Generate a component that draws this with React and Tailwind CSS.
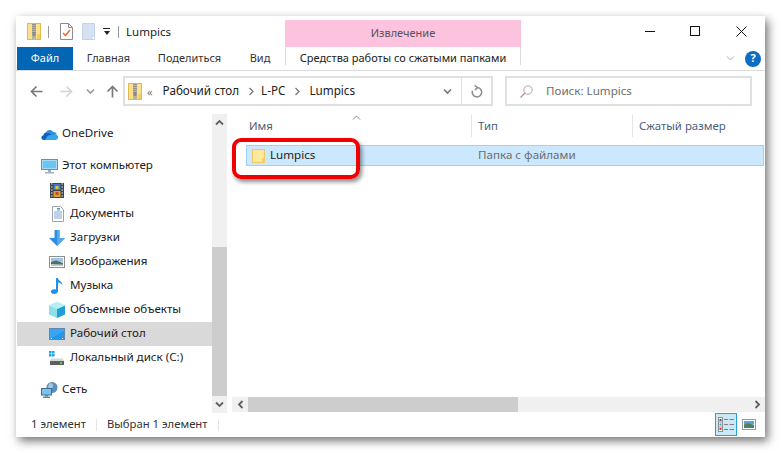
import React from 'react';

const font = { fontFamily: '"Noto Sans", sans-serif' };

// Iconos del explorador
function ZipIcon() {
  return (
    <svg width="14" height="17" viewBox="0 0 14 17">
      <rect x="0.5" y="0.5" width="13" height="16" fill="#fbe08f" stroke="#e3b94c" />
      <rect x="5" y="1" width="4" height="15" fill="#b9b49c" />
      <path d="M6 1v9M8 1v9" stroke="#6f6f6f" strokeDasharray="1 1" />
      <rect x="5.5" y="9" width="3" height="4" fill="#8a8a8a" />
      <rect x="10" y="11" width="3" height="5" fill="#f3cc6c" />
    </svg>
  );
}

function CheckDocIcon() {
  return (
    <svg width="13" height="17" viewBox="0 0 13 17">
      <path d="M.5.5h8l4 4v12H.5z" fill="#fff" stroke="#8c8c8c" />
      <path d="M8.5.5v4h4" fill="none" stroke="#8c8c8c" />
      <path d="M3 10l2.5 2.5L10 7" fill="none" stroke="#e8703a" strokeWidth="1.6" />
    </svg>
  );
}

function BlankDocIcon() {
  return (
    <svg width="13" height="17" viewBox="0 0 13 17">
      <path d="M.5.5h12v16H.5z" fill="#d6e2f3" stroke="#c3d3ea" />
      <path d="M10 13h2.5v3.5H10z" fill="#fff" stroke="#c3d3ea" />
    </svg>
  );
}

function ArrowIcon({ color, flip }) {
  return (
    <svg width="13" height="13" viewBox="0 0 13 13" className={flip ? 'rotate-180' : ''}>
      <path d="M12.5 6.5H1.5M6.5 1.5l-5 5 5 5" fill="none" stroke={color} strokeWidth="1.7" />
    </svg>
  );
}

function SmallChevron({ color = '#777', width = 1.6, up, left, right }) {
  const rot = up ? 'rotate-180' : left ? 'rotate-90' : right ? '-rotate-90' : '';
  return (
    <svg width="9" height="7" viewBox="0 0 9 7" className={rot}>
      <path d="M1 1.5l3.5 3.5L8 1.5" fill="none" stroke={color} strokeWidth={width} />
    </svg>
  );
}

function OneDriveIcon() {
  return (
    <svg width="17" height="11" viewBox="0 0 17 11">
      <path d="M3 11C0 11-.7 7 2.4 6.2 3 3 6.3 2.600 7.700 4 10 4 11 5.500 11 7l-1 4z" fill="#0c64b8" />
      <path d="M5 3.500C6.500.5 10.500.3 12 3c2-.3 3.500.8 3.700 2.400L11 6.500C10 4.500 8 3.500 5 3.500z" fill="#2a8fdc" />
      <path d="M4 11l3-4.500 4-.5 3-.5c2 0 3.500 1.500 3 3.500-.3 1.300-1.300 2-2.500 2z" fill="#37a6ee" />
    </svg>
  );
}

function PcIcon() {
  return (
    <svg width="17" height="15" viewBox="0 0 17 15">
      <rect x="0.5" y="0.5" width="16" height="10" fill="#a6dcf7" stroke="#6f8ea3" />
      <rect x="2" y="2" width="13" height="7" fill="#6cc4f2" />
      <rect x="7" y="11" width="3" height="2" fill="#9fb1be" />
      <rect x="4" y="13" width="9" height="1.500" fill="#9fb1be" />
    </svg>
  );
}

function VideoIcon() {
  return (
    <svg width="14" height="15" viewBox="0 0 14 15">
      <rect width="14" height="15" fill="#3b4450" />
      <path d="M1 1h1.500M1 4h1.500M1 7h1.500M1 10h1.500M1 13h1.500M11.500 1H13M11.500 4H13M11.500 7H13M11.500 10H13M11.500 13H13" stroke="#e6e6e6" />
      <rect x="3.500" y="1" width="7" height="6" fill="#3f7cc4" />
      <rect x="3.500" y="8" width="7" height="6" fill="#d9a531" />
      <rect x="5.500" y="3" width="3" height="3" fill="#e3c33c" />
      <rect x="5.500" y="9" width="3" height="3" fill="#c4492d" />
    </svg>
  );
}

function DocsIcon() {
  return (
    <svg width="12" height="16" viewBox="0 0 12 16">
      <path d="M.5.5h8l3 3v12H.5z" fill="#fdfdfd" stroke="#9aa5b1" />
      <path d="M2 6h8M2 8h8M2 10h8M2 12h8" stroke="#7fa8cf" />
      <path d="M5 2.500h3M5 4h3" stroke="#4a90d0" />
    </svg>
  );
}

function DownloadIcon() {
  return (
    <svg width="16" height="16" viewBox="0 0 16 16">
      <path d="M5.500 0h5v8H16l-8 8-8-8h5.500z" fill="#2f8de0" />
      <path d="M8 0h2.500v8H16l-8 8z" fill="#56a8ee" />
    </svg>
  );
}

function PictureIcon() {
  return (
    <svg width="16" height="12" viewBox="0 0 16 12">
      <rect x="0.5" y="0.5" width="15" height="11" fill="#fff" stroke="#8f8f8f" />
      <rect x="2" y="2" width="12" height="4" fill="#9cc4e4" />
      <path d="M2 6l5-1.500L14 7v3H2z" fill="#4d6f64" />
      <path d="M2 8l12 .5V10H2z" fill="#b9c7c0" />
    </svg>
  );
}

function MusicIcon() {
  return (
    <svg width="12" height="16" viewBox="0 0 12 16">
      <path d="M5 0h1.800c.3 3 4.700 3.500 4.700 7-1-1.500-3-2.300-4.500-2.500V13c0 2-2 3-4 3S0 15 0 13.500 2 11 5 11.500z" fill="#1f8fe8" />
    </svg>
  );
}

function CubeIcon() {
  return (
    <svg width="16" height="16" viewBox="0 0 16 16">
      <path d="M8 0l8 3.500v9L8 16l-8-3.500v-9z" fill="#8ce0ea" />
      <path d="M8 7l8-3.500v9L8 16z" fill="#1f9fd2" />
      <path d="M8 0l8 3.500L8 7 0 3.500z" fill="#b7f0f3" />
    </svg>
  );
}

function DesktopIcon() {
  return (
    <svg width="16" height="12" viewBox="0 0 16 12">
      <rect x="0.5" y="0.5" width="15" height="11" fill="#3aa5f5" stroke="#5a8cb3" />
      <path d="M1 11L15 3v8z" fill="#2596ee" />
      <path d="M2 10.500h1M13 10.500h1" stroke="#fff" />
    </svg>
  );
}

function DiskIcon() {
  return (
    <svg width="15" height="15" viewBox="0 0 15 15">
      <rect x="0" y="0" width="2.500" height="2.500" fill="#1aa3e8" />
      <rect x="3" y="0" width="2.500" height="2.500" fill="#1aa3e8" />
      <rect x="0" y="3" width="2.500" height="2.500" fill="#1aa3e8" />
      <rect x="3" y="3" width="2.500" height="2.500" fill="#1aa3e8" />
      <path d="M2 7.500h11.500L15 10H1z" fill="#d7d7d7" />
      <rect x="1" y="10" width="14" height="4" fill="#5f5f5f" />
      <rect x="11" y="11" width="2" height="2" fill="#45d04b" />
    </svg>
  );
}

function NetworkIcon() {
  return (
    <svg width="17" height="16" viewBox="0 0 17 16">
      <circle cx="11" cy="5.500" r="5.500" fill="#5a8fc0" />
      <path d="M9 1c3 0 4 3 2 5S7 6 7 4z" fill="#a8c7dd" />
      <rect x="0.5" y="6.500" width="10" height="6.500" fill="#7cc3ec" stroke="#3f6f92" />
      <rect x="4" y="13" width="3" height="1.500" fill="#5b8aa8" />
      <rect x="2" y="14.500" width="7" height="1.500" fill="#5b8aa8" />
    </svg>
  );
}

function FolderIcon() {
  return (
    <svg width="13" height="14" viewBox="0 0 13 14">
      <rect x="0.5" y="0.500" width="12" height="13" fill="#fde89c" stroke="#e9c867" />
      <rect x="10" y="9" width="2.500" height="4.500" fill="#f4d06f" />
    </svg>
  );
}

function DetailsViewIcon() {
  return (
    <svg width="16" height="15" viewBox="0 0 16 15">
      <rect x="0.500" y="0.500" width="4" height="14" fill="#fff" stroke="#8f8f8f" />
      <path d="M1 5h3M1 10h3" stroke="#8f8f8f" />
      <rect x="1.500" y="2" width="2" height="2" fill="#555" />
      <rect x="1.500" y="6.500" width="2" height="2" fill="#3f8fe0" />
      <rect x="1.500" y="11" width="2" height="2" fill="#d83030" />
      <path d="M6 2.500h4M11.500 2.500H16M6 7.500h4M11.500 7.500H16M6 12.500h4M11.500 12.500H16" stroke="#8b7d7b" />
    </svg>
  );
}

function TilesViewIcon() {
  return (
    <svg width="14" height="11" viewBox="0 0 14 11">
      <rect x="0.500" y="0.500" width="13" height="10" fill="#fff" stroke="#9a9a9a" />
      <rect x="2" y="2" width="10" height="3.500" fill="#5aa5d8" />
      <path d="M2 5.500l4-1.500 6 2v3H2z" fill="#4d7f6a" />
    </svg>
  );
}

const navItems = [
  { label: 'OneDrive', icon: <OneDriveIcon />, top: 'mt-[11px]', level: 0 },
  { label: 'Этот компьютер', icon: <PcIcon />, top: 'mt-2', level: 0 },
  { label: 'Видео', icon: <VideoIcon />, iconClass: 'ml-px', labelClass: '-ml-px', level: 1 },
  { label: 'Документы', icon: <DocsIcon />, iconClass: 'ml-[3px]', labelClass: '-ml-[3px]', level: 1 },
  { label: 'Загрузки', icon: <DownloadIcon />, level: 1 },
  { label: 'Изображения', icon: <PictureIcon />, level: 1 },
  { label: 'Музыка', icon: <MusicIcon />, iconClass: 'ml-[2px]', labelClass: '-ml-[2px]', level: 1 },
  { label: 'Объемные объекты', icon: <CubeIcon />, level: 1 },
  { label: 'Рабочий стол', icon: <DesktopIcon />, level: 1, selected: true },
  { label: 'Локальный диск (C:)', icon: <DiskIcon />, level: 1 },
  { label: 'Сеть', icon: <NetworkIcon />, top: 'mt-2', level: 0 },
];

function NavRow({ item }) {
  return (
    <div className={`flex h-6 items-center ${item.top || ''} ${item.selected ? 'bg-[#d9d9d9]' : ''} ${item.level ? 'pl-[32px]' : 'pl-[24px]'}`}>
      <span className={`flex h-4 w-[21px] items-center ${item.iconClass || ''}`}>{item.icon}</span>
      <span className={`pb-[2px] text-[11.6px] text-[#1a1a1a] ${item.labelClass || ''}`}>{item.label}</span>
    </div>
  );
}

function App() {
  return (
    <div className="h-[453px] w-[781px] bg-white pl-4 pt-4" style={font}>
      <div className="relative flex h-[421px] w-[749px] flex-col bg-white shadow-[3px_4px_9px_rgba(0,0,0,0.55)]">
        {/* Barra de titulo */}
        <div className="flex h-[31px] items-end">
          <div className="flex h-[31px] w-[269px] items-center pl-[11px]">
            <ZipIcon />
            <div className="ml-[7px] h-3 w-px bg-[#999]" />
            <div className="ml-[11px]"><CheckDocIcon /></div>
            <div className="ml-[9px]"><BlankDocIcon /></div>
            <div className="ml-2 flex flex-col items-center">
              <div className="h-px w-[7px] bg-[#222]" />
              <div className="mt-[2px] h-0 w-0 border-x-[3.5px] border-t-[4px] border-x-transparent border-t-[#222]" />
            </div>
            <div className="ml-2 h-3 w-px bg-[#999]" />
            <span className="ml-[7px] text-[11.5px] text-[#222]">Lumpics</span>
          </div>
          <div className="flex h-[27px] w-[236px] items-center justify-center bg-[#fdc3de] text-[11px] text-[#555]">Извлечение</div>
          <div className="mr-px flex h-[31px] flex-1 items-start justify-end">
            <div className="flex h-[31px] w-[45px] items-center justify-center pb-[1px]"><div className="h-px w-[10px] bg-[#111]" /></div>
            <div className="flex h-[31px] w-[46px] items-center justify-center pb-[1px]"><div className="h-[10px] w-[10px] border border-[#111]" /></div>
            <div className="flex h-[31px] w-[46px] items-center justify-center pb-[1px]">
              <svg width="11" height="11" viewBox="0 0 11 11"><path d="M.5.5l10 10M10.500.5l-10 10" stroke="#111" /></svg>
            </div>
          </div>
        </div>

        {/* Pestanas */}
        <div className="flex h-6 items-stretch border-b border-[#dadbdc] text-[11px] text-[#333]">
          <div className="ml-px flex h-[23px] w-14 items-center justify-center bg-[#0366b4] text-white">Файл</div>
          <div className="flex h-[23px] w-[71px] items-center justify-center">Главная</div>
          <div className="flex h-[23px] w-[91px] items-center justify-center">Поделиться</div>
          <div className="flex h-[23px] w-[50px] items-center justify-center">Вид</div>
          <div className="flex h-[18px] w-[236px] items-center justify-center whitespace-nowrap border-x border-[#dadbdc] pt-1 text-[#222]">Средства работы со сжатыми папками</div>
          <div className="flex h-[23px] flex-1 items-center justify-end pr-[4px]">
            <SmallChevron color="#a8a8a8" width={1} />
            <div className="ml-[10px] flex h-4 w-4 items-center justify-center rounded-full bg-[#0f6cc4] text-[11px] font-bold text-white">?</div>
          </div>
        </div>

        {/* Direccion y busqueda */}
        <div className="flex h-[40px] items-start pt-[5px]">
          <div className="flex h-[30px] w-[107px] items-center pl-[14px]">
            <ArrowIcon color="#7a7a7a" />
            <div className="ml-[17px]"><ArrowIcon color="#d4d4d4" flip /></div>
            <div className="ml-[13px]"><SmallChevron color="#999" /></div>
            <div className="ml-[11px] rotate-90"><ArrowIcon color="#7a7a7a" /></div>
          </div>
          <div className="flex h-[30px] w-[370px] items-center border-2 border-[#e0e0e0] pl-[3px] text-[11.7px] text-[#222]">
            <ZipIcon />
            <span className="ml-[5px] text-[11px] leading-none text-[#777]">«</span>
            <span className="ml-[10px]">Рабочий стол</span>
            <span className="ml-[8px]"><SmallChevron right width={1.3} /></span>
            <span className="ml-[5px]">L-PC</span>
            <span className="ml-[8px]"><SmallChevron right width={1.3} /></span>
            <span className="ml-[7px]">Lumpics</span>
            <span className="ml-auto flex h-full items-center">
              <SmallChevron color="#777" />
              <span className="ml-[9px] h-full w-px bg-[#e0e0e0]" />
              <span className="flex w-[29px] items-center justify-center">
                <svg width="12" height="13" viewBox="0 0 12 13"><path d="M6 2.500a4.700 4.700 0 1 1-4.500 3.300M3.500.5L6.500 2.500 4 5" fill="none" stroke="#8a8a8a" strokeWidth="1.500" /></svg>
              </span>
            </span>
          </div>
          <div className="ml-3 flex h-[30px] w-[247px] items-center border-2 border-[#e0e0e0] pl-[13px] text-[11.6px] text-[#6d6d6d]">
            <svg width="13" height="13" viewBox="0 0 13 13"><circle cx="8" cy="5" r="4.200" fill="none" stroke="#b5a7a0" /><path d="M5 8l-4.500 4.500" stroke="#c2849a" strokeWidth="1.200" /></svg>
            <span className="ml-[13px]">Поиск: Lumpics</span>
          </div>
        </div>

        {/* Panel principal */}
        <div className="flex min-h-0 flex-1">
          <div className="w-[196px] pl-px">
            {navItems.map(item => <NavRow key={item.label} item={item} />)}
          </div>

          {/* Scroll vertical */}
          <div className="mt-[3px] flex h-[299px] w-[15px] flex-col bg-[#f0f0f0]">
            <div className="flex h-[17px] items-center justify-center"><SmallChevron up color="#606060" width={1.8} /></div>
            <div className="mt-[116px] h-[149px] bg-[#cdcdcd]" />
            <div className="flex flex-1 items-center justify-center"><SmallChevron color="#606060" width={1.8} /></div>
          </div>

          <div className="relative ml-[3px] flex min-w-0 flex-1 flex-col">
            {/* Cabecera de columnas */}
            <div className="flex h-[26px] items-end text-[11.4px] text-[#4c607a]">
              <div className="flex h-[23px] w-[242px] items-center border-r border-[#e5e5e5] pl-[19px]">Имя</div>
              <div className="flex h-[23px] w-[161px] items-center border-r border-[#e5e5e5] pl-[6px]">Тип</div>
              <div className="flex h-[23px] items-center pl-[6px]">Сжатый размер</div>
            </div>
            <div className="absolute left-[122px] top-[3px]"><SmallChevron up color="#888" width={1} /></div>

            {/* Fila seleccionada */}
            <div className="ml-[16px] mt-2 flex h-[21px] w-[518px] items-center border border-[#99d1ff] bg-[#cce8ff] pl-[5px] text-[11.6px]">
              <FolderIcon />
              <span className="ml-[5px] w-[208px] pb-[2px] text-[#222]">Lumpics</span>
              <span className="pb-[2px] text-[#6d6d6d]">Папка с файлами</span>
            </div>

            <div className="flex-1" />

            {/* Scroll horizontal */}
            <div className="ml-[2px] flex h-[15px] items-center bg-[#f0f0f0]">
              <div className="flex w-[16px] justify-center"><SmallChevron left color="#606060" width={1.8} /></div>
              <div className="h-full w-[270px] bg-[#cdcdcd]" />
              <div className="flex flex-1 justify-end pr-[3px]"><SmallChevron right color="#606060" width={1.8} /></div>
            </div>

            {/* Marco rojo */}
            <div className="absolute left-[2px] top-[27px] h-[41px] w-[128px] rounded-[9px] border-4 border-[#f00000] shadow-[2px_3px_4px_rgba(0,0,0,0.45)]" />
          </div>
        </div>

        {/* Barra de estado */}
        <div className="flex h-[25px] items-center pl-[15px] text-[11.3px] text-[#333]">
          <span>1 элемент</span>
          <span className="ml-[10px] h-3 w-px bg-[#e5e5e5]" />
          <span className="ml-[10px]">Выбран 1 элемент</span>
          <span className="ml-[10px] h-3 w-px bg-[#e5e5e5]" />
          <div className="ml-auto flex items-center pr-[9px]">
            <div className="flex h-[23px] w-[22px] items-center justify-center border border-[#26a0da] bg-[#cbe8f6]"><DetailsViewIcon /></div>
            <div className="ml-[5px] flex w-[14px] items-center justify-center"><TilesViewIcon /></div>
          </div>
        </div>
      </div>
    </div>
  );
}

export default App;
